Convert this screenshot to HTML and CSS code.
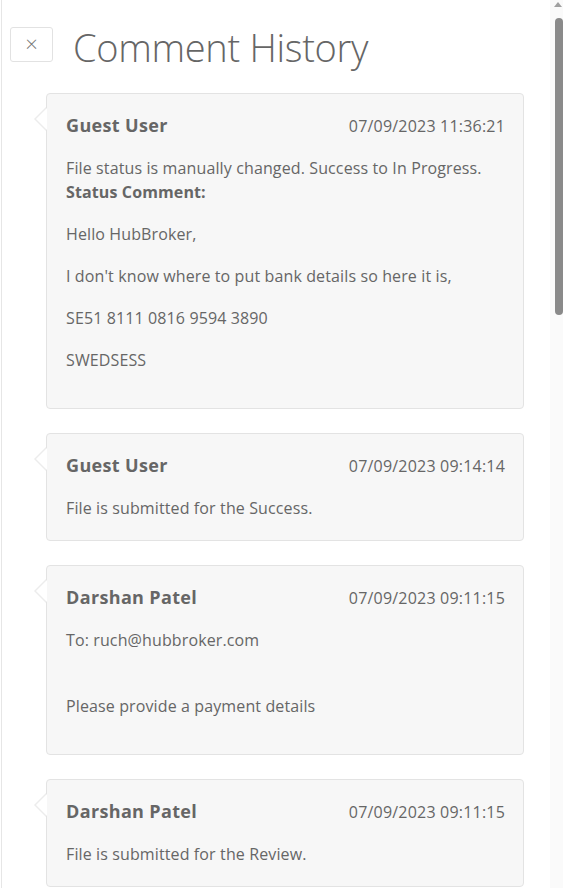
FILE: index.html
```html
<!DOCTYPE html>
<html lang="en">
<head>
<meta charset="utf-8">
<title>Comment History</title>
<link rel="stylesheet" href="styles.css">
</head>
<body>
<div class="panel">
  <header class="header">
    <button class="close" type="button" aria-label="Close">&times;</button>
    <h1 class="title">Comment History</h1>
  </header>
  <div class="list">
    <article class="card">
      <div class="card-head">
        <span class="name">Guest User</span>
        <span class="date">07/09/2023 11:36:21</span>
      </div>
      <div class="card-body">
        <div class="line">File status is manually changed. Success to In Progress.</div>
        <div class="line"><strong>Status Comment:</strong></div>
        <p>Hello HubBroker,</p>
        <p>I don't know where to put bank details so here it is,</p>
        <p>SE51 8111 0816 9594 3890</p>
        <p>SWEDSESS</p>
      </div>
    </article>
    <article class="card">
      <div class="card-head">
        <span class="name">Guest User</span>
        <span class="date">07/09/2023 09:14:14</span>
      </div>
      <div class="card-body">
        <div class="line">File is submitted for the Success.</div>
      </div>
    </article>
    <article class="card">
      <div class="card-head">
        <span class="name">Darshan Patel</span>
        <span class="date">07/09/2023 09:11:15</span>
      </div>
      <div class="card-body">
        <p>To: ruch@hubbroker.com<br><br></p>
        <p>Please provide a payment details</p>
      </div>
    </article>
    <article class="card">
      <div class="card-head">
        <span class="name">Darshan Patel</span>
        <span class="date">07/09/2023 09:11:15</span>
      </div>
      <div class="card-body">
        <div class="line">File is submitted for the Review.</div>
      </div>
    </article>
  </div>
</div>
<div class="scrollbar" aria-hidden="true">
  <div class="scroll-up"></div>
  <div class="scroll-thumb"></div>
</div>
</body>
</html>
```

FILE: styles.css
```css
html, body {
  margin: 0;
  padding: 0;
  height: 100%;
  overflow: hidden;
  background: #fff;
}

body {
  font-family: "Open Sans", "Liberation Sans", sans-serif;
  color: #666;
  font-size: 16px;
  line-height: 24px;
  letter-spacing: 0.12px;
}

.panel {
  height: 100%;
  border-left: 1px solid #e6e6e6;
  margin-left: 1px;
  box-sizing: border-box;
}

.header {
  display: flex;
  align-items: flex-start;
  padding: 27px 0 0 8px;
  height: 93px;
  box-sizing: border-box;
}

.close {
  width: 43px;
  height: 35px;
  border: 1px solid #e2e2e2;
  border-radius: 3px;
  background: #fff;
  color: #777;
  font-family: "Open Sans", sans-serif;
  font-size: 22px;
  font-weight: 300;
  line-height: 1;
  padding: 0 0 3px;
  margin: 0;
}

.title {
  margin: -4px 0 0 20px;
  font-size: 38px;
  line-height: 48px;
  font-weight: 300;
  letter-spacing: -0.3px;
  color: #666;
}

.list {
  display: flex;
  flex-direction: column;
  gap: 24px;
  padding: 0 39px 0 44px;
}

.card {
  position: relative;
  background: #f7f7f7;
  border: 1px solid #e3e3e3;
  border-radius: 4px;
  padding: 19px 18px 20px 19px;
}

.card::before,
.card::after {
  content: "";
  position: absolute;
  top: 13px;
  width: 0;
  height: 0;
  border-style: solid;
}

.card::before {
  left: -13px;
  border-width: 12px 12px 12px 0;
  border-color: transparent #ececec transparent transparent;
}

.card::after {
  left: -11px;
  top: 14px;
  border-width: 11px 11px 11px 0;
  border-color: transparent #fff transparent transparent;
}

.card-head {
  display: flex;
  justify-content: space-between;
  align-items: baseline;
  margin-bottom: 18px;
}

.name {
  font-weight: 700;
  font-size: 18px;
  letter-spacing: 0.35px;
  color: #666;
}

.date {
  font-size: 16px;
  letter-spacing: 0.2px;
}

.card-body p {
  margin: 18px 0 0;
}

.card-body p:first-child {
  margin-top: 0;
}

.card-body p:last-child {
  margin-bottom: 16px;
}

.scrollbar {
  position: fixed;
  top: 0;
  right: 0;
  width: 13px;
  height: 100%;
  background: #fafafa;
}

.scroll-up {
  position: absolute;
  top: 2px;
  right: 1px;
  width: 0;
  height: 0;
  border-left: 4px solid transparent;
  border-right: 4px solid transparent;
  border-bottom: 5px solid #a0a0a0;
}

.scroll-thumb {
  position: absolute;
  top: 18px;
  right: 0;
  width: 8px;
  height: 297px;
  background: #8a8a8a;
  border-radius: 4px;
}
```
